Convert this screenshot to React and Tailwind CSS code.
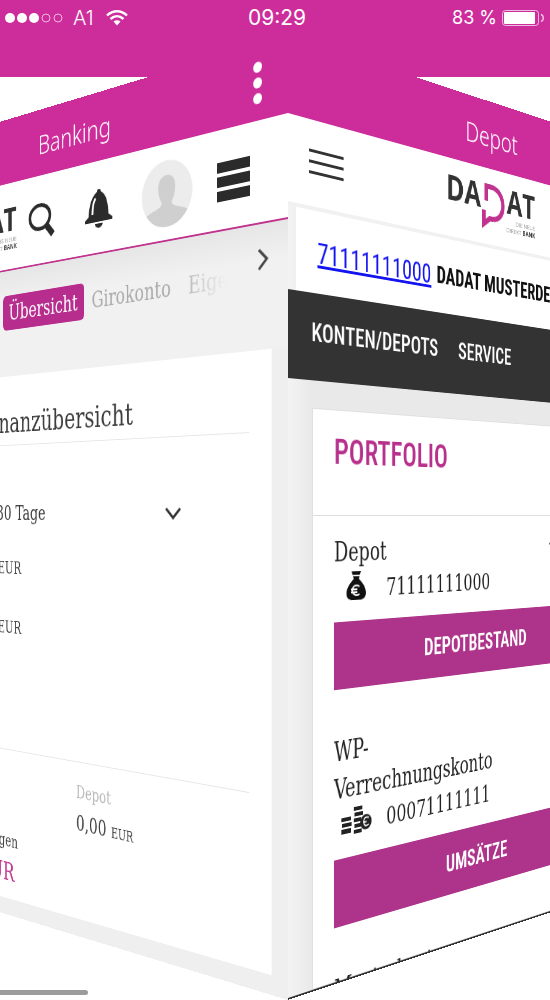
import React from "react";

const serif = "font-['DejaVu_Serif_Condensed','DejaVu_Serif',serif]";
const narrow = "font-['Roboto_Condensed','Open_Sans_Condensed','Liberation_Sans_Narrow','Roboto',sans-serif]";

function StatusBar() {
  return (
    <header className="h-[77px] bg-[#cd2d9b] px-[5px] font-['Inter',sans-serif] text-white">
      <div className="grid h-9 grid-cols-3 items-center text-lg">
        <div className="flex items-center gap-2">
          <svg className="h-3 w-[60px]" viewBox="0 0 60 12" aria-label="Signal">
            <circle cx="5" cy="6" r="5" fill="#fff" />
            <circle cx="17" cy="6" r="5" fill="#fff" />
            <circle cx="29" cy="6" r="5" fill="#fff" />
            <circle cx="41" cy="6" r="4" fill="none" stroke="#f3b5e0" />
            <circle cx="53" cy="6" r="4" fill="none" stroke="#f3b5e0" />
          </svg>
          <span className="text-xl font-light">A1</span>
          <svg className="ml-1 h-4 w-[22px]" viewBox="0 0 22 16" fill="none" stroke="#fff" strokeWidth="2.4" aria-label="WLAN">
            <path d="M1 5.5C7-.2 15-.2 21 5.5" />
            <path d="M4.5 9C8.500 5.300 13.500 5.300 17.500 9" />
            <path d="M7.500 11.500 11 15.500 14.500 11.500C12.500 9.700 9.500 9.700 7.500 11.500Z" fill="#fff" stroke="none" />
          </svg>
        </div>
        <time className="pl-1 text-center text-[21px]">09:29</time>
        <div className="flex items-center justify-end gap-1">
          <span className="whitespace-nowrap">83 %</span>
          <svg className="h-[18px] w-11" viewBox="0 0 44 18" aria-label="Akku">
            <rect x="1.500" y="1.500" width="36" height="15" rx="3" fill="none" stroke="#eebbe0" />
            <rect x="3" y="3" width="31" height="12" rx="1" fill="#fff" />
            <path d="M40 5.500c3 1 3 6 0 7" fill="none" stroke="#eebbe0" strokeWidth="1.500" />
          </svg>
        </div>
      </div>
    </header>
  );
}

function TitleBar({ title, menu }) {
  return (
    <div className="relative flex h-[78px] shrink-0 items-center justify-center bg-[#cd2d9b] pt-1 font-['Noto_Sans',sans-serif] text-[32px] text-white">
      <h1 className="font-light">{title}</h1>
      {menu && (
        <button aria-label="Mehr" className="absolute top-[18px] right-8 flex flex-col gap-[5px]">
          <i className="size-[11px] rounded-full bg-white" />
          <i className="size-[11px] rounded-full bg-white" />
          <i className="size-[11px] rounded-full bg-white" />
        </button>
      )}
    </div>
  );
}

function Logo() {
  return (
    <div className="flex flex-col items-end font-['Open_Sans',sans-serif]">
      <div className="flex h-8 items-center text-[40px] leading-8 font-bold text-[#333]">
        DA
        <svg className="h-14 w-11 self-start" viewBox="0 0 44 56" fill="none" stroke="#c0338f" strokeWidth="6" aria-label="D">
          <path d="M9 22V5H17C44 5 44 42 19 42H15L5 49V33" />
        </svg>
        AT
      </div>
      <div className="pt-1 text-right text-[8px] leading-[9px] text-[#999]">
        DIE NEUE
        <br />
        DIREKT <b className="text-[#444]">BANK</b>
      </div>
    </div>
  );
}

function BankingFace() {
  return (
    <section className="ml-[calc(52.4%-600px)] flex h-[965px] w-[600px] shrink-0 origin-right rotate-y-[-35deg] flex-col bg-[#efefef] pb-5">
      <TitleBar title="Banking" menu />
      <div className="flex h-[106px] shrink-0 items-center justify-end border-b-2 border-[#c0338f] bg-white pt-1 pr-[47px] text-[#2b2b2b]">
        <div className="mr-5"><Logo /></div>
        <button aria-label="Suche" className="mr-12">
          <svg className="h-[42px] w-[45px]" viewBox="0 0 45 42" fill="none" stroke="currentColor">
            <ellipse cx="20" cy="16" rx="17" ry="14" strokeWidth="4.500" />
            <path d="M31 27 42 39" strokeWidth="8" />
          </svg>
        </button>
        <button aria-label="Mitteilungen" className="mr-[43px]">
          <svg className="h-[46px] w-[45px]" viewBox="0 0 45 46" fill="currentColor">
            <path d="M20 4a3 3 0 0 1 6 0C35 9 37 18 38 31l6 4v3H1v-3l6-4C8 18 11 9 20 4Z" />
            <path d="M18 11c-4 4-5 11-5 18" fill="none" stroke="#fff" strokeWidth="3" />
            <path d="M17 40h12a6 5 0 0 1-12 0Z" />
          </svg>
        </button>
        <button aria-label="Profil" className="mr-[33px]">
          <svg className="size-[72px]" viewBox="0 0 72 72">
            <circle cx="36" cy="36" r="36" fill="#ececec" />
            <path d="M36 16c9 0 13 7 12 16-1 8-4 11-5 14 1 6 17 7 22 11-7 10-17 15-29 15S14 67 7 57c5-4 21-5 22-11-1-3-4-6-5-14-1-9 3-16 12-16Z" fill="#cfcfcf" />
          </svg>
        </button>
        <button aria-label="Menü" className="flex w-[43px] flex-col gap-1">
          <i className="h-[11px] bg-current" />
          <i className="h-[11px] bg-current" />
          <i className="h-[11px] bg-current" />
        </button>
      </div>
      <nav className={"flex h-32 shrink-0 items-start justify-end bg-linear-to-b from-[#e6e6e6] to-[#f1f1f1] to-30% pr-6 text-[26px] text-[#aaa] " + serif}>
        <div className="mt-[30px] flex w-[342px] overflow-hidden mask-r-from-80%">
          <a href="#uebersicht" className="flex h-[42px] items-center rounded-md bg-[#b62d8e] px-[10px] text-white">Übersicht</a>
          <a href="#girokonto" className="flex h-[42px] items-center px-3">Girokonto</a>
          <a href="#eigen" className="flex h-[42px] items-center px-3">Eigenübertrag</a>
        </div>
        <button aria-label="Weiter" className="mt-6 ml-10">
          <svg className="h-6 w-[14px]" viewBox="0 0 14 24" fill="none" stroke="#444" strokeWidth="3">
            <path d="m2 2 10 10L2 22" />
          </svg>
        </button>
      </nav>
      <div className={"mx-5 flex flex-1 flex-col bg-white text-[#3d3d3d] " + serif}>
        <h2 className="mr-7 h-[84px] shrink-0 border-b border-[#e6e6e6] pt-9 pr-40 text-right text-[34px] leading-10">Finanzübersicht</h2>
        <div className="relative mt-[60px] ml-8 mr-[118px]">
          <select aria-label="Zeitraum" className="h-11 w-full appearance-none bg-white pl-10 text-2xl">
            <option>Letzte 30 Tage</option>
          </select>
          <svg className="pointer-events-none absolute right-0 top-4 h-[13px] w-6" viewBox="0 0 24 13" fill="none" stroke="#333" strokeWidth="3">
            <path d="m2 1 10 10L22 1" />
          </svg>
        </div>
        <p className="mt-6 pr-[368px] text-right text-xl leading-10">0,00 EUR</p>
        <p className="mt-8 pr-[368px] text-right text-xl leading-10">0,00 EUR</p>
        <div className="mt-[128px] mr-7 grid grid-cols-2 border-t border-[#e6e6e6] pt-4">
          <div className="pt-[76px] text-right">
            <p className="pr-20 text-xl leading-9">Buchungen</p>
            <p className="pr-[86px] text-3xl leading-10 text-[#c0338f]">0,00 EUR</p>
          </div>
          <div className="pl-[18px]">
            <p className="text-xl leading-9 text-[#b5b5b5]">Depot</p>
            <p className="text-2xl leading-9">0,00 <span className="text-base">EUR</span></p>
          </div>
        </div>
      </div>
    </section>
  );
}

function MoneyBag() {
  return (
    <svg className="h-[30px] w-[27px]" viewBox="0 0 27 30" aria-label="Depot">
      <path d="M7 0h13l-3 8c5 4 10 9 10 15 0 5-4 7-8 7H8c-4 0-8-2-8-7C0 17 5 12 10 8Z" fill="#111" />
      <path d="M6 4.500h15" stroke="#fff" strokeWidth="1.500" />
      <path d="M18 16c-7-3-10 1-10 4s4 7 10 4M6 19h9M6 22h9" fill="none" stroke="#fff" strokeWidth="1.800" />
    </svg>
  );
}

function Coins() {
  return (
    <svg className="h-7 w-[42px]" viewBox="0 0 42 28" fill="#222" aria-label="Verrechnungskonto">
      <path d="M0 9h13v4H0zM1 15h13v4H1zM0 21h13v5H0zM17 0h12v4H17zM18 6h12v4H18zM17 12h10v4H17zM18 18h9v4h-9zM17 24h11v4H17z" />
      <circle cx="34" cy="18" r="8" />
      <path d="M38 14c-6-2-7 1-7 4s3 6 7 3M30 18h5" fill="none" stroke="#fff" strokeWidth="1.500" />
    </svg>
  );
}

function Account({ name, icon, number, action, expandable }) {
  return (
    <article className="flex flex-col text-[26px] leading-[39px] text-[#222]">
      <div className="flex items-center gap-[101px]">
        <h3 className="w-60 text-[27px]">{name}</h3>
        {expandable && (
          <button aria-label="Details">
            <svg className="h-3 w-6" viewBox="0 0 24 12" fill="none" stroke="#333" strokeWidth="3">
              <path d="m2 1 10 9L22 1" />
            </svg>
          </button>
        )}
      </div>
      <p className="flex items-center">
        <span className="flex w-[73px] justify-center pr-3 pb-2">{icon}</span>
        {number}
      </p>
      <button className={"mt-[14px] h-[70px] w-[430px] bg-[#ad348a] font-semibold text-white " + narrow}>{action}</button>
    </article>
  );
}

function DepotFace() {
  return (
    <section className="flex h-[965px] w-[600px] shrink-0 origin-left rotate-y-[37deg] flex-col overflow-hidden border-b-2 border-[#333] bg-linear-to-r from-[#f3f3f3] to-[#e9e9e9] to-5%">
      <TitleBar title="Depot" />
      <div className="relative flex h-[92px] shrink-0 items-start justify-center border-b-4 border-[#f1f1f1] bg-white pt-4">
        <button aria-label="Menü" className="absolute left-[27px] top-[30px] flex w-[46px] flex-col gap-2">
          <i className="h-[3px] bg-[#333]" />
          <i className="h-[3px] bg-[#333]" />
          <i className="h-[3px] bg-[#333]" />
        </button>
        <Logo />
      </div>
      <div className={"ml-[10px] flex h-[84px] shrink-0 items-center gap-2 bg-white pl-7 whitespace-nowrap " + narrow}>
        <a href="#depot" className="text-[30px] text-[#1414f0] underline">71111111000</a>
        <span className="text-[26px] font-bold text-[#111]">DADAT MUSTERDEPOT</span>
      </div>
      <nav className={"flex h-[89px] shrink-0 items-center gap-8 bg-[#333] pb-2 pl-[30px] text-[26px] font-medium text-white " + narrow}>
        <a href="#konten">KONTEN/DEPOTS</a>
        <a href="#service">SERVICE</a>
      </nav>
      <div className={"mt-7 ml-[31px] min-h-0 flex-1 border border-[#e0e0e0] bg-white " + serif}>
        <h2 className={"h-[109px] border-b border-[#ddd] pt-4 pl-7 text-4xl leading-[54px] font-medium text-[#b8308c] " + narrow}>PORTFOLIO</h2>
        <div className="flex flex-col gap-[45px] pt-[18px] pl-7">
          <Account name="Depot" icon={<MoneyBag />} number="71111111000" action="DEPOTBESTAND" expandable />
          <Account name="WP-Verrechnungskonto" icon={<Coins />} number="00071111111" action="UMSÄTZE" />
          <Account name="Musterkonto" icon={<Coins />} number="00071111112" action="UMSÄTZE" />
        </div>
      </div>
    </section>
  );
}

export default function App() {
  return (
    <div className="relative min-h-screen overflow-hidden bg-white">
      <StatusBar />
      <main className="-mt-[42px] flex perspective-[1106px] perspective-origin-[50%_480px]">
        <BankingFace />
        <DepotFace />
      </main>
      <div className="absolute bottom-[5px] left-0 h-[5px] w-[16%] rounded-r bg-[#9c9c9c]" />
    </div>
  );
}
